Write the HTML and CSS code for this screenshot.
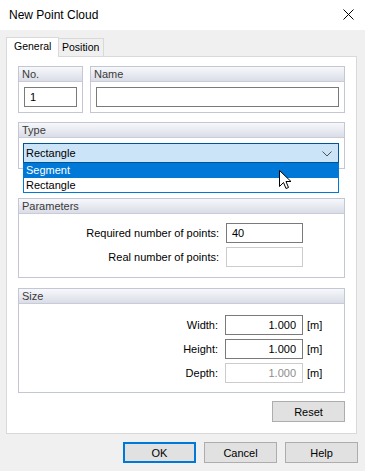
FILE: index.html
```html
<!DOCTYPE html>
<html lang="en">
<head>
    <meta charset="UTF-8">
    <meta name="viewport" content="width=device-width, initial-scale=1.0">
    <title>New Point Cloud</title>
    <link rel="stylesheet" href="styles.css">
</head>
<body>
    <div class="titlebar">
        <span>New Point Cloud</span>
        <svg class="close" width="11" height="11" viewBox="0 0 11 11">
            <path d="M0.5 0.5 L10.5 10.5 M10.5 0.5 L0.5 10.5" stroke="#000" stroke-width="1"/>
        </svg>
    </div>
    <div class="dialog">
        <div class="tabs">
            <div class="tab active">General</div>
            <div class="tab">Position</div>
        </div>
        <div class="panel">
            <div class="row">
                <div class="group no">
                    <div class="ghead">No.</div>
                    <div class="gbody"><div class="field">1</div></div>
                </div>
                <div class="group name">
                    <div class="ghead">Name</div>
                    <div class="gbody"><div class="field"></div></div>
                </div>
            </div>

            <div class="group type">
                <div class="ghead">Type</div>
                <div class="gbody">
                    <div class="combo">
                        <span>Rectangle</span>
                        <svg class="chevron" width="10" height="6" viewBox="0 0 10 6">
                            <path d="M0.5 0.5 L5 5 L9.5 0.5" fill="none" stroke="#505050" stroke-width="1"/>
                        </svg>
                        <div class="droplist">
                            <div class="item selected">Segment</div>
                            <div class="item">Rectangle</div>
                        </div>
                    </div>
                </div>
            </div>

            <div class="group params">
                <div class="ghead">Parameters</div>
                <div class="gbody form">
                    <div class="frow">
                        <label>Required number of points:</label>
                        <div class="field">40</div>
                        <span class="unit"></span>
                    </div>
                    <div class="frow">
                        <label>Real number of points:</label>
                        <div class="field disabled"></div>
                        <span class="unit"></span>
                    </div>
                </div>
            </div>

            <div class="group size">
                <div class="ghead">Size</div>
                <div class="gbody form">
                    <div class="frow">
                        <label>Width:</label>
                        <div class="field num">1.000</div>
                        <span class="unit">[m]</span>
                    </div>
                    <div class="frow">
                        <label>Height:</label>
                        <div class="field num">1.000</div>
                        <span class="unit">[m]</span>
                    </div>
                    <div class="frow">
                        <label>Depth:</label>
                        <div class="field num disabled">1.000</div>
                        <span class="unit">[m]</span>
                    </div>
                </div>
            </div>

            <div class="panel-foot">
                <button class="btn">Reset</button>
            </div>
        </div>

        <div class="buttons">
            <button class="btn default">OK</button>
            <button class="btn">Cancel</button>
            <button class="btn">Help</button>
        </div>
    </div>

    <svg class="cursor" width="13" height="20" viewBox="0 0 13 20">
        <path d="M0.5 0.5 V16.5 L4.5 12.5 L7 18.5 L9.5 17.5 L7 11.5 H12 Z" fill="#fff" stroke="#000" stroke-width="1" stroke-linejoin="miter"/>
    </svg>
</body>
</html>
```

FILE: styles.css
```css
body {
    margin: 0;
    width: 365px;
    height: 471px;
    background-color: #f0f0f0;
    font-family: "Liberation Sans", Arial, sans-serif;
    font-size: 11px;
    color: #000;
    overflow: hidden;
}
.titlebar {
    display: flex;
    align-items: center;
    justify-content: space-between;
    height: 30px;
    padding: 0 11px 0 9px;
    background-color: #fff;
    font-size: 12px;
}
.close {
    margin-top: -1px;
}
.dialog {
    padding-top: 8px;
}
.tabs {
    display: flex;
    align-items: flex-end;
    height: 19px;
    margin: 0 0 -1px 6px;
    position: relative;
    font-size: 10.5px;
}
.tab {
    height: 17px;
    line-height: 17px;
    padding: 0 4px 0 3px;
    border: 1px solid #d9d9d9;
    border-bottom: none;
    border-left: none;
    background-color: #f0f0f0;
    margin-bottom: 1px;
}
.tab.active {
    height: 19px;
    line-height: 17px;
    width: 44px;
    padding: 0 0 0 7px;
    border-left: 1px solid #d9d9d9;
    background-color: #fff;
    margin-bottom: 0;
}
.panel {
    margin: 0 8px 0 6px;
    padding: 9px 11px 11px 11px;
    border: 1px solid #d9d9d9;
    background-color: #fff;
}
.row {
    display: flex;
    gap: 7px;
}
.group {
    border: 1px solid #c3c7d3;
}
.group.no {
    width: 63px;
}
.group.name {
    flex: 1;
}
.ghead {
    height: 14px;
    line-height: 14px;
    padding-left: 3px;
    color: #3a3a3a;
    background: linear-gradient(#f7f8fb, #dadde7);
    border-bottom: 1px solid #c9ccd8;
}
.gbody {
    padding: 5px 5px 5px 5px;
}
.field {
    height: 18px;
    line-height: 18px;
    padding: 0 5px;
    border: 1px solid #7a7a7a;
    background-color: #fff;
}
.field.disabled {
    border-color: #cccccc;
    color: #8d8d8d;
}
.field.num {
    text-align: right;
    padding-right: 6px;
}
.group.type {
    margin-top: 9px;
}
.type .gbody {
    padding: 5px 5px 5px 4px;
}
.combo {
    display: flex;
    align-items: center;
    justify-content: space-between;
    height: 18px;
    padding: 0 6px 0 2px;
    border: 1px solid #005499;
    background-color: #cce4f7;
    position: relative;
}
.chevron {
    margin-top: 1px;
}
.droplist {
    position: absolute;
    left: -1px;
    right: -1px;
    top: 19px;
    border: 1px solid #0078d7;
    border-top: none;
    background-color: #fff;
}
.item {
    height: 14px;
    line-height: 14px;
    padding-left: 2px;
}
.item.selected {
    height: 15px;
    line-height: 14px;
    color: #fff;
    background-color: #0078d7;
}
.group.params {
    margin-top: 29px;
}
.params .gbody {
    padding: 9px 0 10px 0;
}
.group.size {
    margin-top: 10px;
}
.size .gbody {
    padding: 11px 0 9px 0;
}
.form {
    display: flex;
    flex-direction: column;
    gap: 4px;
}
.frow {
    display: flex;
    align-items: center;
}
.frow label {
    flex: 1;
    text-align: right;
    padding-right: 7px;
}
.frow .field {
    width: 65px;
}
.unit {
    width: 37px;
    padding-left: 4px;
}
.panel-foot {
    display: flex;
    justify-content: flex-end;
    margin-top: 8px;
}
.btn {
    width: 73px;
    height: 21px;
    padding: 0;
    border: 1px solid #adadad;
    background-color: #e1e1e1;
    font-family: "Liberation Sans", Arial, sans-serif;
    font-size: 11px;
    color: #000;
}
.btn.default {
    border: 2px solid #0078d7;
}
.buttons {
    display: flex;
    justify-content: flex-end;
    gap: 8px;
    margin: 8px 7px 0 0;
}
.cursor {
    position: absolute;
    left: 279px;
    top: 170px;
}
```
